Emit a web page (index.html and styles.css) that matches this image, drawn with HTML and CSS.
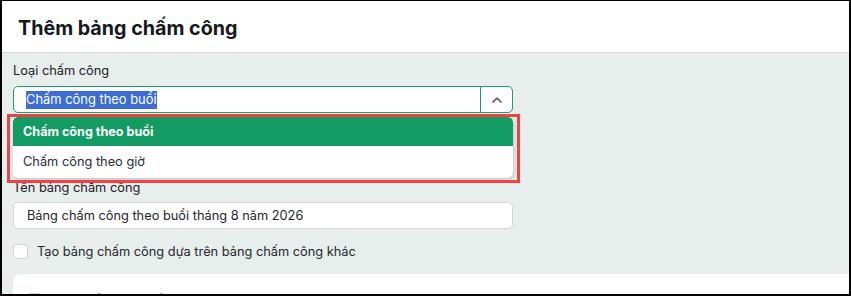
FILE: index.html
```html
<!DOCTYPE html>
<html lang="vi">
<head>
<meta charset="utf-8">
<link rel="stylesheet" href="styles.css">
</head>
<body>
<div class="frame">
  <header class="header">
    <h1 class="title">Thêm bảng chấm công</h1>
  </header>
  <main class="content">
    <div class="field">
      <label class="label">Loại chấm công</label>
      <div class="select-wrap">
        <div class="select">
          <span class="select-value"><span class="sel">Chấm công theo buổi</span></span>
          <span class="select-btn">
            <svg width="12" height="8" viewBox="0 0 12 8"><path d="M2 6 L6 2.2 L10 6" fill="none" stroke="#6b6f73" stroke-width="1.8" stroke-linecap="round" stroke-linejoin="round"/></svg>
          </span>
        </div>
        <ul class="dropdown">
          <li class="option active">Chấm công theo buổi</li>
          <li class="option">Chấm công theo giờ</li>
        </ul>
        <div class="annot"></div>
      </div>
    </div>
    <div class="field field-name">
      <label class="label">Tên bảng chấm công</label>
      <div class="input">Bảng chấm công theo buổi tháng 8 năm 2026</div>
    </div>
    <div class="check-row">
      <span class="checkbox"></span>
      <span class="check-text">Tạo bảng chấm công dựa trên bảng chấm công khác</span>
    </div>
    <section class="card">
      <div class="check-row card-row">
        <span class="checkbox"></span>
        <span class="check-text">Chọn cấu hình chấm công</span>
      </div>
    </section>
  </main>
</div>
</body>
</html>
```

FILE: styles.css
```css
* { box-sizing: border-box; }
html, body { margin: 0; padding: 0; background: #fff; }
body { font-family: Inter, "Noto Sans", "Liberation Sans", sans-serif; color: #1d2126; }

.frame {
  width: 851px;
  height: 296px;
  border-style: solid;
  border-color: #000;
  border-width: 1px 2px 2px 2px;
  overflow: hidden;
  background: #e8eeec;
  display: flex;
  flex-direction: column;
}

.header {
  height: 52px;
  flex: none;
  background: #fff;
  border-bottom: 1px solid #d3d9d7;
  display: flex;
  align-items: center;
  padding-left: 16px;
}
.title {
  margin: 0;
  font-size: 19.7px;
  font-weight: 700;
  color: #16191d;
  padding-top: 2px;
}

.content {
  padding: 9px 0 0 11px;
  display: flex;
  flex-direction: column;
}

.field { width: 500px; display: flex; flex-direction: column; }
.label {
  font-size: 12.8px;
  line-height: 18px;
  color: #1d2126;
}

.select-wrap { position: relative; margin-top: 6px; }
.select {
  height: 27px;
  border: 1px solid #1f9d6c;
  border-radius: 5px;
  background: #fff;
  display: flex;
  align-items: stretch;
}
.select-value {
  flex: 1;
  display: flex;
  align-items: center;
  padding-left: 12px;
  font-size: 12.9px;
}
.sel {
  background: #3c6dd3;
  color: #fff;
  line-height: 18px;
}
.select-btn {
  width: 32px;
  border-left: 1px solid #1f9d6c;
  display: flex;
  align-items: center;
  justify-content: center;
}

.dropdown {
  list-style: none;
  margin: 4px 0 0;
  padding: 0 0 2px;
  background: #fff;
  border-radius: 0 5px 6px 6px;
  box-shadow: 1px 2px 5px rgba(0, 0, 0, 0.18);
  overflow: hidden;
}
.option {
  height: 30px;
  display: flex;
  align-items: center;
  padding-left: 10px;
  font-size: 12.8px;
  color: #2a2e33;
}
.option.active {
  height: 29px;
  background: #129b63;
  color: #fff;
  font-weight: 700;
  font-size: 12.6px;
  border-radius: 5px 5px 0 0;
}

.annot {
  position: absolute;
  left: -6px;
  top: 28px;
  width: 513px;
  height: 69px;
  border: 3px solid #ef4146;
  pointer-events: none;
}

.field-name { margin-top: 1px; }
.input {
  margin-top: 5px;
  height: 27px;
  border: 1px solid #d3d8dc;
  border-radius: 5px;
  background: #fff;
  display: flex;
  align-items: center;
  padding-left: 13px;
  font-size: 12.8px;
  color: #24282d;
}

.check-row {
  margin-top: 13px;
  display: flex;
  align-items: center;
  gap: 9px;
  height: 18px;
}
.checkbox {
  width: 15px;
  height: 15px;
  flex: none;
  border: 1px solid #cfd4d8;
  border-radius: 3px;
  background: #fff;
}
.check-text { font-size: 12.8px; color: #24282d; }

.card {
  margin-top: 14px;
  width: 900px;
  height: 60px;
  background: #fff;
  border-radius: 8px;
  padding: 17px 0 0 13px;
}
.card-row { margin-top: 0; }
```
